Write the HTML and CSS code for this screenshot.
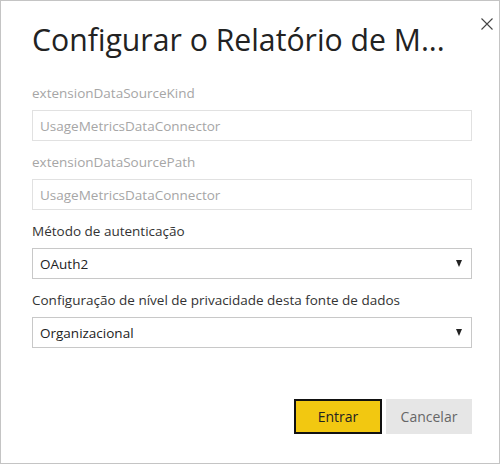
FILE: index.html
```html
<!DOCTYPE html>
<html lang="pt">
<head>
<meta charset="utf-8">
<link rel="stylesheet" href="styles.css">
</head>
<body>
<div class="dialog">
  <button class="close" aria-label="Fechar">
    <svg width="12" height="12" viewBox="0 0 12 12"><path d="M0.5 0.5 L11.5 11.5 M11.5 0.5 L0.5 11.5" stroke="#444" stroke-width="1.1" fill="none"/></svg>
  </button>
  <h1 class="title">Configurar o Relatório de M...</h1>
  <div class="field">
    <div class="label disabled">extensionDataSourceKind</div>
    <div class="control disabled">UsageMetricsDataConnector</div>
  </div>
  <div class="field">
    <div class="label disabled">extensionDataSourcePath</div>
    <div class="control disabled">UsageMetricsDataConnector</div>
  </div>
  <div class="field">
    <div class="label">Método de autenticação</div>
    <div class="control select"><span>OAuth2</span><span class="arrow"></span></div>
  </div>
  <div class="field">
    <div class="label">Configuração de nível de privacidade desta fonte de dados</div>
    <div class="control select"><span>Organizacional</span><span class="arrow"></span></div>
  </div>
  <div class="actions">
    <button class="btn primary">Entrar</button>
    <button class="btn secondary">Cancelar</button>
  </div>
</div>
</body>
</html>
```
FILE: styles.css
```css
html, body {
  margin: 0;
  padding: 0;
  background: #fff;
}
body {
  font-family: "Open Sans", "Noto Sans", "Liberation Sans", sans-serif;
  color: #252525;
}
.dialog {
  position: relative;
  width: 500px;
  height: 464px;
  box-sizing: border-box;
  border: 1px solid #c4c4c4;
  padding: 0 27px 0 31px;
  display: flex;
  flex-direction: column;
}
.close {
  position: absolute;
  left: 479px;
  top: 16px;
  width: 14px;
  height: 14px;
  padding: 1px;
  border: 0;
  background: none;
  display: flex;
}
.title {
  margin: 18px 0 0 0;
  font-size: 30.2px;
  font-weight: 400;
  line-height: 42px;
  color: #222;
  white-space: nowrap;
}
.field {
  display: flex;
  flex-direction: column;
}
.field:first-of-type {
  margin-top: 23px;
}
.label {
  font-size: 13.5px;
  line-height: 19px;
  margin-bottom: 7px;
  color: #333;
}
.label.disabled {
  color: #a6a6a6;
}
.control {
  height: 31px;
  box-sizing: border-box;
  border: 1px solid #c8c8c8;
  padding: 0 9px 0 7px;
  font-size: 13.5px;
  display: flex;
  align-items: center;
  color: #222;
  margin-bottom: 12px;
}
.control.disabled {
  border-color: #e1e1e1;
  color: #a6a6a6;
}
.select {
  justify-content: space-between;
}
.arrow {
  width: 0;
  height: 0;
  border-left: 3px solid transparent;
  border-right: 3px solid transparent;
  border-top: 7px solid #222;
}
.actions {
  margin-top: auto;
  margin-bottom: 29px;
  display: flex;
  justify-content: flex-end;
  gap: 4px;
}
.btn {
  height: 35px;
  box-sizing: border-box;
  font-family: inherit;
  font-size: 14px;
  padding: 0;
}
.primary {
  width: 88px;
  background: #f2c811;
  border: 2px solid #111;
  color: #222;
}
.secondary {
  width: 86px;
  background: #e6e6e6;
  border: 0;
  color: #666;
}
```
